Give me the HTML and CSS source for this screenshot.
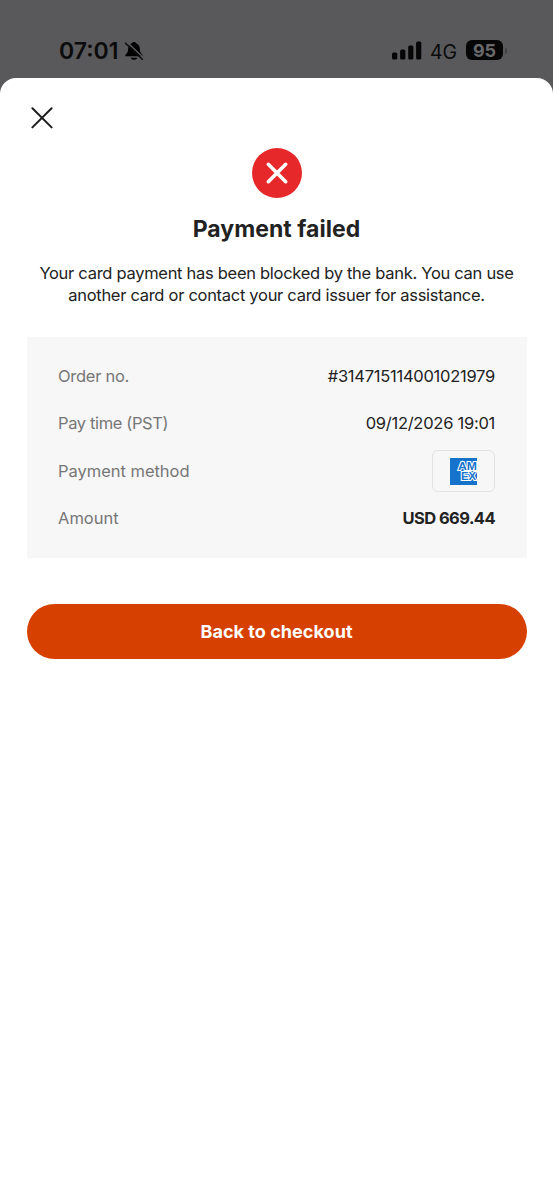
FILE: index.html
```html
<!DOCTYPE html>
<html lang="en">
<head>
<meta charset="utf-8">
<title>Payment failed</title>
<link rel="stylesheet" href="styles.css">
</head>
<body>
<header class="status">
  <span class="time">07:01</span>
  <svg class="bell" width="20" height="20" viewBox="0 0 20 20"><path d="M1.2 15.2C1.2 13 4 12.5 4.1 8.5C4.2 4.8 5.7 3 8 2.3C8.3.4 11.7.4 12 2.3C14.3 3 15.8 4.8 15.9 8.5C16 12.5 18.8 13 18.8 15.2ZM6.8 16.8H13.2C12.8 19.5 7.2 19.5 6.8 16.8Z"/><path class="cut" d="M2 .2L20 17.3"/><path class="slash" d="M1 1.7L18.8 18.8"/></svg>
  <svg class="signal" width="30" height="19" viewBox="0 0 30 19"><rect x="0" y="11.5" width="5.3" height="7" rx="1.5"/><rect x="8.1" y="8.5" width="5.3" height="10" rx="1.5"/><rect x="16.2" y="4.5" width="5.2" height="14" rx="1.5"/><rect x="24.1" y=".5" width="5.2" height="18" rx="1.5"/></svg>
  <span class="network">4G</span>
  <span class="battery">95</span>
  <span class="cap"></span>
</header>
<main class="sheet">
  <svg class="close" width="22" height="22" viewBox="0 0 22 22"><path d="M1.4 1.2L20.6 20.4M20.6 1.2L1.4 20.4"/></svg>
  <svg class="failed" width="50" height="50" viewBox="0 0 50 50"><circle cx="25" cy="25" r="25"/><path d="M16.3 16.3L33.7 33.7M33.7 16.3L16.3 33.7"/></svg>
  <h1 class="title">Payment failed</h1>
  <p class="message">Your card payment has been blocked by the bank. You can use<br>another card or contact your card issuer for assistance.</p>
  <dl class="details">
    <div class="row"><dt class="order">Order no.</dt><dd class="number">#314715114001021979</dd></div>
    <div class="row"><dt class="paytime">Pay time (PST)</dt><dd class="number">09/12/2026 19:01</dd></div>
    <div class="row"><dt class="method">Payment method</dt><dd class="card"><svg width="27" height="27" viewBox="0 0 27 27"><rect class="blue" width="27" height="27"/><g class="amex"><text x="8" y="12.4" textLength="19" lengthAdjust="spacingAndGlyphs">AM</text><text x="11" y="22" textLength="15" lengthAdjust="spacingAndGlyphs">EX</text></g></svg></dd></div>
    <div class="row"><dt>Amount</dt><dd class="amount">USD 669.44</dd></div>
  </dl>
  <button class="back">Back to checkout</button>
</main>
</body>
</html>
```
FILE: styles.css
```css
* { box-sizing: border-box; }
body { margin: 0; height: 1200px; background: #59595b; color: #222; font-family: Inter, sans-serif; overflow: hidden; }
.status { height: 78px; padding: 36px 46px 0 59px; display: flex; align-items: flex-start; color: #0b0b0c; }
.time { font-size: 23px; line-height: 31px; font-weight: 600; letter-spacing: 0; width: 65px; white-space: nowrap; }
.bell { margin-top: 5px; }
.slash { stroke: #0b0b0c; stroke-width: 1.5; }
.cut { stroke: #59595b; stroke-width: 1.5; }
.signal { margin: 5px 0 0 auto; fill: #060607; }
.network { margin-left: 8px; width: 36px; font-size: 19.5px; line-height: 32px; }
.battery { width: 37px; height: 20px; margin-top: 4px; border-radius: 6px; background: #060607; color: #69696b; font-size: 18px; font-weight: 700; line-height: 21px; text-align: center; }
.cap { width: 2px; height: 6px; margin: 12px 0 0 2px; border-radius: 0 2px 2px 0; background: #414143; }
.sheet { height: 1122px; padding: 29px 26.5px 0; border-radius: 16px 16px 0 0; background: #fff; display: flex; flex-direction: column; }
.close { margin-left: 4.5px; fill: none; stroke: #1d1d1d; stroke-width: 2; stroke-linecap: round; }
.failed { align-self: center; margin: 19px 0 0 1px; fill: #e7282b; }
.failed path { fill: none; stroke: #fff; stroke-width: 3.6; stroke-linecap: round; }
.title { margin: 16px 0 0; font-size: 23px; line-height: 31px; font-weight: 650; text-align: center; letter-spacing: .05px; }
.message { margin: 18px -20px 0; font-size: 16.5px; line-height: 21.5px; text-align: center; white-space: nowrap; letter-spacing: -.29px; }
.details { margin: 31px 0 0; height: 221px; padding: 15px 31.5px 0; background: #f7f7f7; }
.row { height: 47.3px; display: flex; justify-content: space-between; align-items: center; font-size: 16.5px; white-space: nowrap; }
.row dt { color: #767676; }
.row dd { margin: 0; }
.row .order { letter-spacing: -.28px; }
.row .paytime { letter-spacing: -.37px; }
.row .method { padding-top: 1px; letter-spacing: -.03px; }
.row .number { letter-spacing: -.26px; }
.row .amount { font-weight: 700; letter-spacing: -.58px; }
.row .card { width: 63px; height: 42px; margin-top: 2px; border: 1.5px solid #e2e2e2; border-radius: 6px; display: flex; align-items: center; justify-content: center; }
.blue { fill: #1673cc; }
.amex { font-family: "Liberation Sans", Arial, sans-serif; font-size: 10px; font-weight: 700; fill: #1673cc; stroke: #fff; stroke-width: 1.8; paint-order: stroke; }
.back { margin-top: 46px; height: 55px; border: 0; border-radius: 28px; background: #d64000; color: #fff; font: 700 18px/24px Inter, sans-serif; padding: 0; letter-spacing: .05px; }
```
